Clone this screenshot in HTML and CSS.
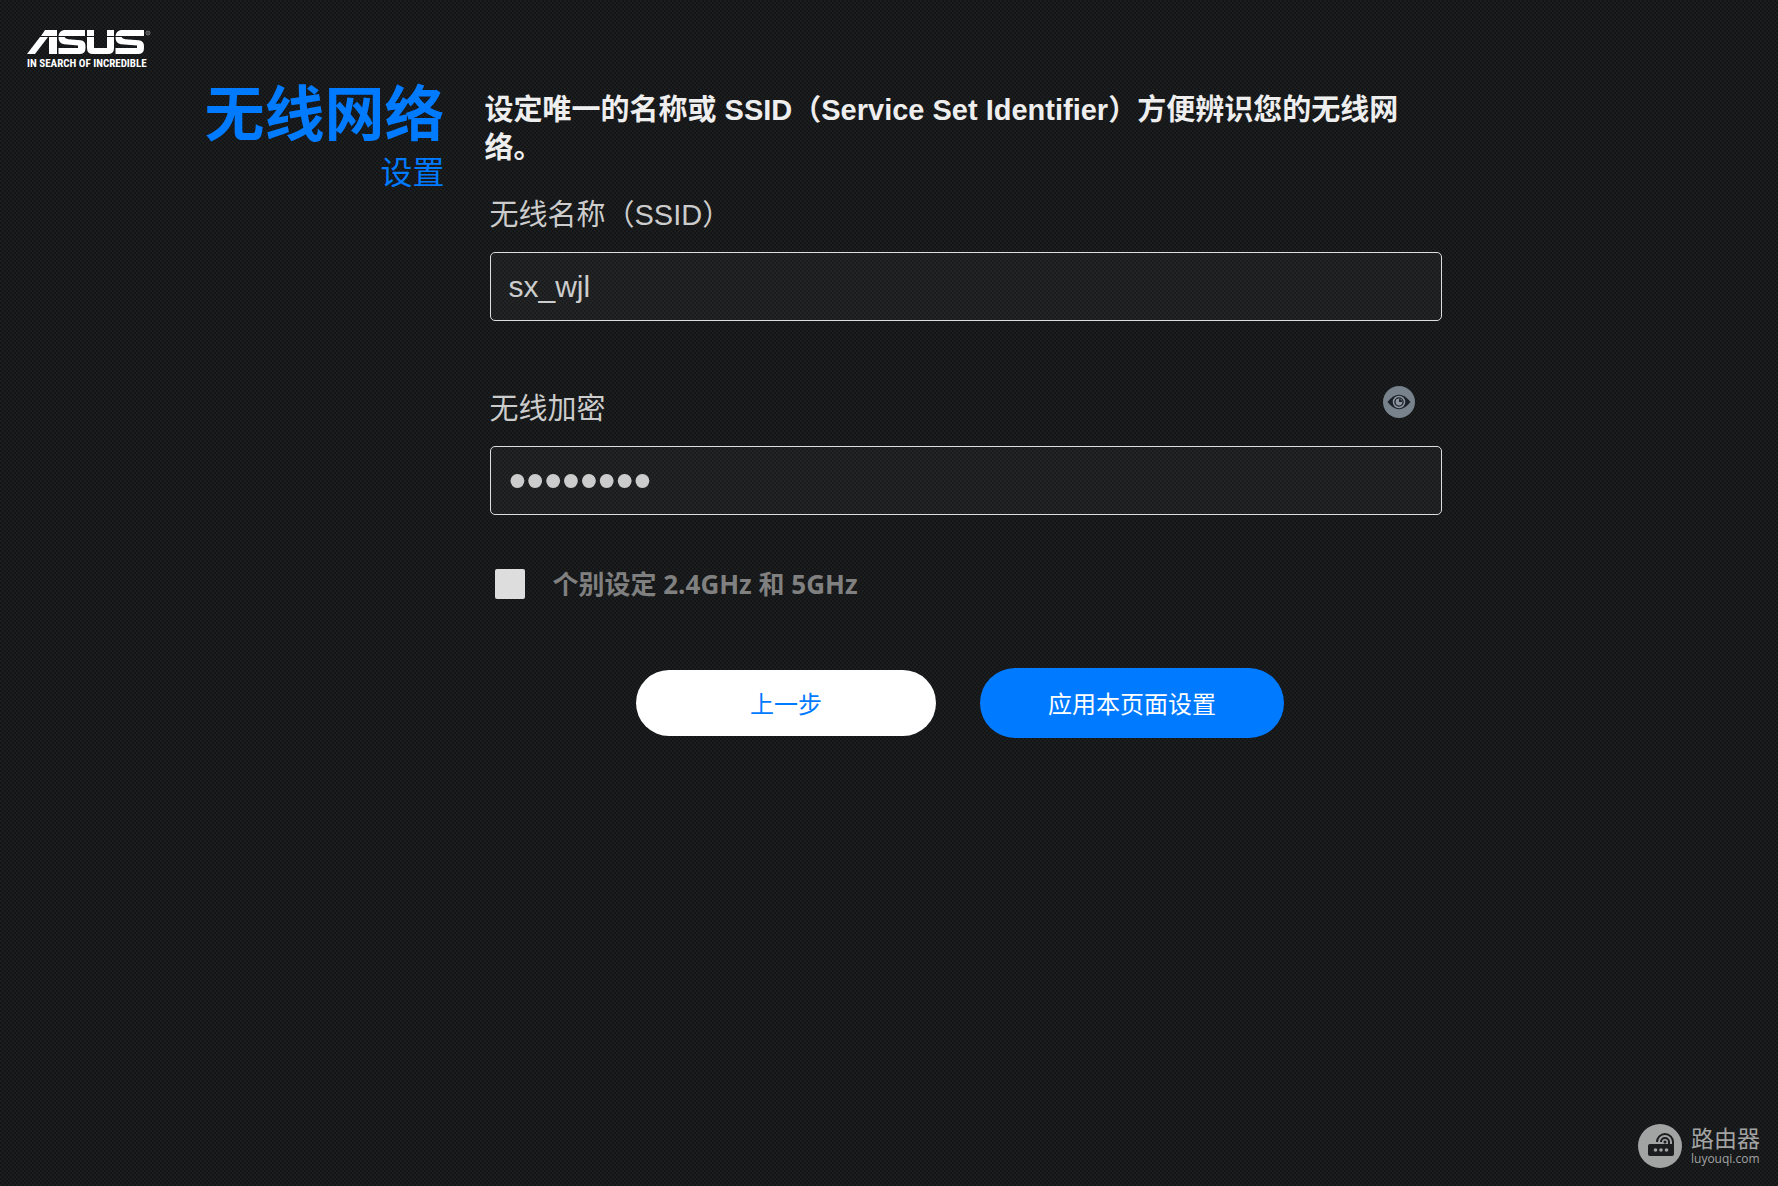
FILE: index.html
```
<!DOCTYPE html>
<html lang="zh-CN">
<head>
    <meta charset="UTF-8">
    <meta name="viewport" content="width=device-width, initial-scale=1.0">
    <title>无线网络设置</title>
    <link rel="stylesheet" href="styles.css">
</head>
<body>
    <header class="header">
        <svg class="logo" viewBox="0 0 126 42" role="img" aria-label="ASUS">
            <g fill="#fff">
                <path d="M18 0h12v6H14z"/>
                <path d="M13 7h8L8 24H0z"/>
                <path d="M22 7h8v17h-8z"/>
                <path d="M37 0h21v6H31.500q.5-5 5.500-6z"/>
                <path d="M31.500 7h6q1 2 4 2.300l12 1q5 .6 5 5.700v2q0 6-6 6H31.500v-6H51v-2.500l-14-1.200q-5.500-.6-5.500-7.300z"/>
                <path d="M60 0h7v6h-7zM80 0h7v6h-7z"/>
                <path d="M60 7h7v11h13V7h7v11q0 6-6 6H66q-6 0-6-6z"/>
                <path d="M94 0h23v6H88.500q.5-5 5.500-6z"/>
                <path d="M88.500 7h6q1 2 4 2.300l13 1q5.500.6 5.500 5.700v2q0 6-6 6H88.500v-6H110v-2.500l-16-1.200q-5.500-.6-5.500-7.300z"/>
            </g>
            <circle cx="121" cy="3" r="2" fill="none" stroke="#999" stroke-width=".7"/>
            <circle cx="121" cy="3" r=".7" fill="#999"/>
        </svg>
        <p class="slogan">IN SEARCH OF INCREDIBLE</p>
    </header>

    <main class="page">
        <div class="page-title">
            <h1>无线网络</h1>
            <p>设置</p>
        </div>

        <form class="wifi-form">
            <h2>设定唯一的名称或 SSID（Service Set Identifier）方便辨识您的无线网络。</h2>

            <div class="field">
                <div class="field-label">
                    <label for="ssid">无线名称（SSID）</label>
                </div>
                <input type="text" id="ssid" value="sx_wjl">
            </div>

            <div class="field">
                <div class="field-label">
                    <label for="password">无线加密</label>
                    <button type="button" class="eye-btn" id="toggle-password" aria-label="显示密码">
                        <svg viewBox="0 0 32 32">
                            <circle cx="16" cy="16" r="16" fill="#77828d"/>
                            <path d="M4.500 16Q16 1.500 27.500 16Q16 30.500 4.500 16z" fill="#1a2027"/>
                            <circle cx="16" cy="16" r="5.500" fill="none" stroke="#8d969f" stroke-width="1.500"/>
                            <circle cx="16" cy="16" r="3.400" fill="#8d969f"/>
                            <path d="M16 16v-3a3 3 0 0 1 3 3z" fill="#1a2027"/>
                        </svg>
                    </button>
                </div>
                <input type="password" id="password" value="12345678">
            </div>

            <div class="split-row">
                <input type="checkbox" id="split">
                <label for="split">个别设定 2.4GHz 和 5GHz</label>
            </div>

            <div class="buttons">
                <button type="button" class="btn prev-btn">上一步</button>
                <button type="button" class="btn apply-btn">应用本页面设置</button>
            </div>
        </form>
    </main>

    <footer class="footer">
        <svg class="footer-icon" viewBox="0 0 44 44">
            <circle cx="22" cy="22" r="22" fill="#a2a3a3"/>
            <rect x="10" y="20" width="26" height="12" rx="2" fill="#1b1d1e"/>
            <g fill="none" stroke="#1b1d1e" stroke-width="2">
                <path d="M19 18a8 8 0 0 1 16 0v3"/>
                <path d="M23 18a4 4 0 0 1 8 0v3"/>
            </g>
            <circle cx="27" cy="18" r="1.500" fill="#1b1d1e"/>
            <g fill="#a2a3a3">
                <circle cx="17.500" cy="26" r="1.800"/>
                <circle cx="23" cy="26" r="1.800"/>
                <circle cx="28.500" cy="26" r="1.800"/>
            </g>
        </svg>
        <div class="footer-text">
            <strong>路由器</strong>
            <span>luyouqi.com</span>
        </div>
    </footer>

    <script>
        // Show or hide the password
        const password = document.getElementById('password');

        document.getElementById('toggle-password').addEventListener('click', () => {
            password.type = password.type === 'password' ? 'text' : 'password';
        });
    </script>
</body>
</html>
```
FILE: styles.css
```
* {
    box-sizing: border-box;
}

body {
    font-family: "Liberation Sans", "Noto Sans CJK SC", sans-serif;
    margin: 0;
    min-height: 100vh;
    display: flex;
    flex-direction: column;
    color: #ccc;
    background: #17191a repeating-conic-gradient(#131516 0 25%, #1b1d1e 0 50%) 0 0 / 4px 4px;
}

h1,
h2,
p {
    margin: 0;
}

/* Header */
.header {
    padding: 30px 27px 0;
    height: 86px;
}

.logo {
    display: block;
    width: 126px;
    height: 42px;
    margin-bottom: -16px;
}

.slogan {
    font-family: "Roboto Condensed", Roboto, sans-serif;
    font-size: 11px;
    font-weight: bold;
    line-height: 16px;
    color: #fff;
    white-space: nowrap;
}

/* Page */
.page {
    display: flex;
    gap: 40px;
    flex: 1;
}

.page-title {
    width: 25%;
    text-align: right;
    color: #007aff;
}

.page-title h1 {
    font-size: 60px;
    line-height: 60px;
}

.page-title p {
    font-size: 32px;
    line-height: 54px;
}

/* Form */
.wifi-form {
    flex: 1;
    max-width: 957px;
}

.wifi-form h2 {
    padding: 5px 32px 0 0;
    margin-bottom: 24px;
    font-size: 29px;
    line-height: 38px;
    color: #eee;
}

.field {
    padding-left: 5px;
    margin-bottom: 64px;
}

.field-label {
    display: flex;
    justify-content: space-between;
    height: 61px;
    font-size: 29px;
    line-height: 48px;
}

.field input {
    display: block;
    width: 100%;
    height: 69px;
    padding: 0 18px;
    font-family: inherit;
    font-size: 30px;
    color: #ccc;
    background: rgba(255, 255, 255, 0.03);
    border: 1px solid #ddd;
    border-radius: 5px;
}

/* Bigger dots while the password is hidden */
.field input[type="password"] {
    font-size: 51px;
}

.eye-btn {
    width: 32px;
    height: 32px;
    padding: 0;
    margin: 1px 27px 0 0;
    background: none;
    border: none;
    cursor: pointer;
}

.eye-btn svg {
    display: block;
}

.split-row {
    display: flex;
    align-items: center;
    gap: 28px;
    padding-left: 10px;
    margin-top: -16px;
    font-family: "Open Sans", "Noto Sans CJK SC", sans-serif;
    font-size: 26px;
    font-weight: bold;
    line-height: 42px;
    color: #808080;
}

.split-row input {
    appearance: none;
    width: 30px;
    height: 30px;
    margin: 0;
    background: #ddd;
    border-radius: 2px;
}

.split-row input:checked {
    background: #007aff;
}

/* Buttons */
.buttons {
    display: flex;
    justify-content: center;
    align-items: center;
    gap: 44px;
    padding-right: 6px;
    margin-top: 63px;
}

.btn {
    width: 300px;
    height: 66px;
    padding: 0 0 2px;
    font-family: inherit;
    font-size: 24px;
    border: none;
    border-radius: 33px;
    cursor: pointer;
}

.prev-btn {
    color: #007aff;
    background: #fff;
}

.apply-btn {
    width: 304px;
    height: 70px;
    color: #fff;
    background: #007aff;
    border-radius: 35px;
}

/* Footer */
.footer {
    display: flex;
    justify-content: flex-end;
    align-items: center;
    gap: 9px;
    padding: 0 18px 18px;
    color: #a2a3a3;
}

.footer-icon {
    width: 44px;
    height: 44px;
}

.footer-text strong {
    display: block;
    font-size: 23px;
    font-weight: normal;
    line-height: 25px;
}

.footer-text span {
    display: block;
    font-family: "Open Sans", sans-serif;
    font-size: 12px;
    line-height: 14px;
}
```
